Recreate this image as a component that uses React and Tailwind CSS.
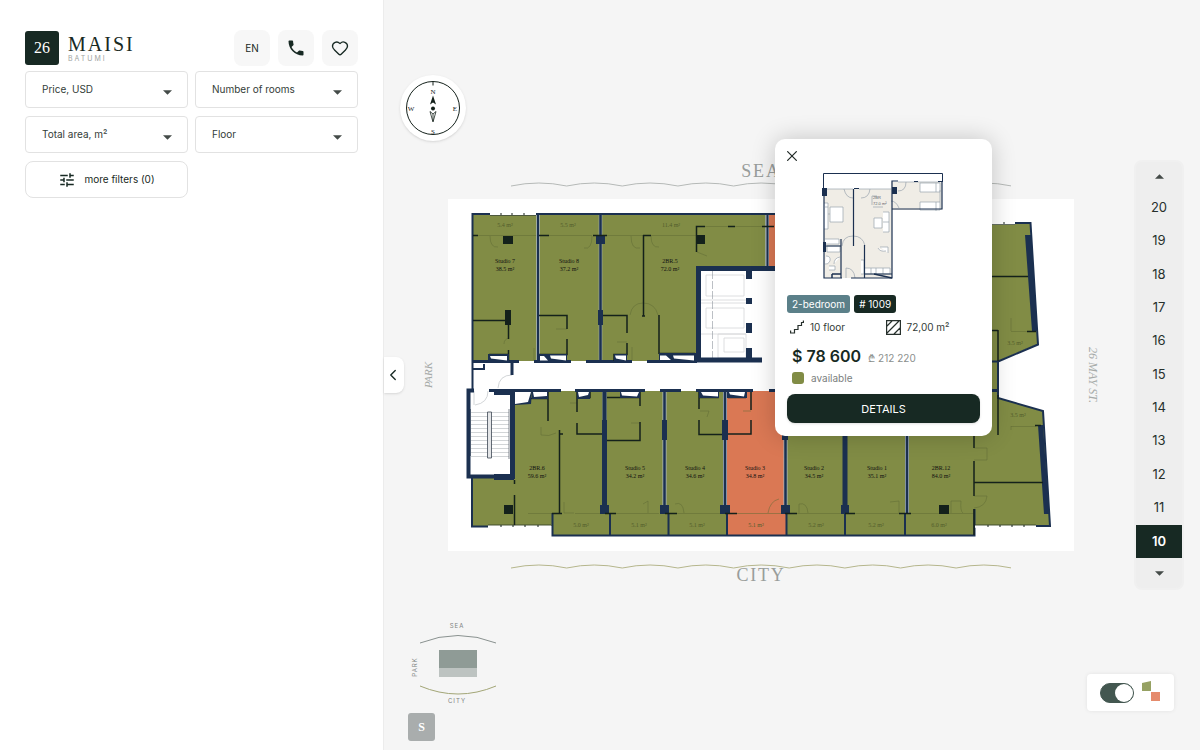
import React, { useState } from "react";
import { ChevronLeft, Heart, X } from "lucide-react";
import { MdPhone, MdTune } from "react-icons/md";

const filters = ["Price, USD", "Number of rooms", "Total area, m²", "Floor"];
const floors = [20, 19, 18, 17, 16, 15, 14, 13, 12, 11, 10];

const NAVY = "#1b3050";
const DARK = "#14211b";
const GREEN = "#818c45";
const ORANGE = "#da7854";

const rooms = [
  { name: "Studio 7", area: "38.5 m²", x: 505, y: 263 },
  { name: "Studio 8", area: "37.2 m²", x: 569, y: 263 },
  { name: "2BR.5", area: "72.0 m²", x: 670, y: 263 },
  { name: "2BR.6", area: "59.6 m²", x: 537, y: 470 },
  { name: "Studio 5", area: "34.2 m²", x: 635, y: 470 },
  { name: "Studio 4", area: "34.6 m²", x: 695, y: 470 },
  { name: "Studio 3", area: "34.8 m²", x: 755, y: 470 },
  { name: "Studio 2", area: "34.5 m²", x: 814, y: 470 },
  { name: "Studio 1", area: "35.1 m²", x: 877, y: 470 },
  { name: "2BR.12", area: "84.0 m²", x: 941, y: 470 },
];

const balconies = [
  ["5.4 m²", 505, 227],
  ["5.5 m²", 568, 227],
  ["11.4 m²", 671, 227],
  ["5.0 m²", 581, 527],
  ["5.1 m²", 639, 527],
  ["5.1 m²", 697, 527],
  ["5.1 m²", 756, 527],
  ["5.2 m²", 816, 527],
  ["5.2 m²", 876, 527],
  ["6.0 m²", 939, 527],
  ["3.5 m²", 1015, 345],
  ["3.5 m²", 1018, 417],
];

const Caret = ({ up, className }) => (
  <svg viewBox="0 0 10 5" className={`h-[5px] w-[9px] ${className || ""}`} aria-hidden="true">
    <path d={up ? "M0 5h10L5 0z" : "M0 0h10L5 5z"} fill="#444b48" />
  </svg>
);

const FilterSelect = ({ label }) => (
  <div className="relative">
    <select
      aria-label={label}
      className="h-[37px] w-full appearance-none rounded border border-[#e2e2e2] bg-white px-4 text-[10px] text-[#333c38] outline-none"
    >
      <option>{label}</option>
    </select>
    <Caret className="pointer-events-none absolute right-4 top-[19px]" />
  </div>
);

const Compass = () => (
  <svg viewBox="0 0 66 66" className="h-[66px] w-[66px] rounded-full bg-white shadow-sm" role="img" aria-label="Compass">
    <circle cx="33" cy="33" r="26.5" fill="none" stroke={DARK} strokeWidth="1" />
    <path d="M33 6.500v4" stroke={DARK} />
    <path d="M33 20.500l3 9-3-2-3 2z" fill={DARK} />
    <circle cx="33" cy="33.500" r="2" fill={DARK} />
    <path d="M33 47l-3-10.500 3 2.500 3-2.500zM33 39v7" fill="none" stroke={DARK} strokeWidth="0.8" />
    <g fill={DARK} fontSize="7" textAnchor="middle" fontFamily="Liberation Serif, serif">
      <text x="33" y="19">N</text>
      <text x="33" y="58.500">S</text>
      <text x="11" y="35.500">W</text>
      <text x="55" y="35.500">E</text>
    </g>
  </svg>
);

const Waves = ({ color }) => (
  <svg viewBox="0 0 501 5" className="mx-auto h-[5px] w-[80%]" preserveAspectRatio="none" aria-hidden="true">
    <path
      d="M0 4Q28-2 55.700 4Q83-2 111.300 4Q139-2 167 4Q195-2 222.700 4Q250-2 278.300 4Q306-2 334 4Q362-2 389.700 4Q417-2 445.300 4Q473-2 501 4"
      fill="none"
      stroke={color}
    />
  </svg>
);

const FloorPlan = () => (
  <svg viewBox="448 199 626 352" className="block w-full bg-white" role="img" aria-label="Plan of the 10 floor">
    {/* Apartments */}
    <g fill={GREEN}>
      <path d="M472 214H768V267H697V361H472z" />
      <path d="M785 214H990V223H1030L1038 344L998 361H785z" />
      <path d="M515 391H605V535H552V526H472V477H515z" />
      <path d="M605 391H727V535H605z" />
      <path d="M785 391H974V535H786z" />
      <path d="M974 361H998V398L1043 411L1050 526H974z" />
    </g>
    <path d="M769 214H785V267H769z M726 391H785V513H787V535H727z" fill={ORANGE} />

    {/* Doors and sills */}
    <g fill="none" stroke="#5f6a35" strokeWidth="0.500">
      <path d="M478 235.500H537M549 235.500H592M605 235.500H643M651 235.500H696M705 226.500H766" />
      <path d="M490 236q0 12 8 11M592 236q0 14 -8 12M631 236q0 14 9 12M651 236q0 12 8 11M697 252l10 4" />
      <path d="M630 315q2-12 13-12q12 0 15 12M556 329h11M617 342h10M509 338q-5 1-5 6M534 348v12M632 347v13" />
      <path d="M528 513.500H558M575 513.500H600M616 513.500H659M677 513.500H720M737 513.500H781M797 513.500H841M855 513.500H899M911 513.500H974" />
      <path d="M564 502v11l10 0M648 513v-12l-5 3M684 513q-1-12-9-9M768 513q2-12 11-14M799 513v-9q8-2 9 9M899 513v-12l-9 1M951 513v-12h10q-1 10 2 12" />
      <path d="M541 427v8q8 2 15-2M570 403h7M631 423h9M700 411h9l-2 6M743 411h8M974 448h13v12h-13M974 496h13q-1 11-13 12" />
      <path d="M1011 331.500h17M1011 331v-13M1011 426.500h25M1011 426v4" />
    </g>

    {/* Lifts */}
    <g fill="none" stroke="#d4d6d8" strokeWidth="0.800">
      <path d="M706 275H744V296H706zM706 308H744V328H706zM724 338H744V352H724zM718 334H746V358H718z" />
      <path d="M701 300H746M701 303H746M701 334H746" />
      <path d="M712.500 271V358" stroke="#8f959d" strokeWidth="0.600" strokeDasharray="8 2" />
    </g>

    {/* Stairs */}
    <g fill="none" stroke="#c6cacd" strokeWidth="0.800">
      <path d="M471 412.500H509M471 416.500H509M471 420.500H509M471 424.500H509M471 428.500H509M471 432.500H509M471 436.500H509M471 440.500H509M471 444.500H509M471 448.500H509M471 452.500H509M471 456.500H509" />
      <path d="M498 388q1-13 14-13M475 405q13-2 13-14M474 405v-14" />
      <path d="M487.500 412H491.500V458H487.500z" fill="#e4e6e8" stroke="#3c4653" />
      <path d="M470.500 409v47M509 409v50" stroke="#5f6872" />
    </g>

    {/* Light outline of the structural walls */}
    <g fill="none" stroke="#a9b5bd" strokeWidth="4">
      <path d="M538 215V361M600.500 215V361M767 215V267" strokeWidth="3.500" />
      <path d="M664.500 392V513M725 392V513M785.500 436V505M907 436V513M604.500 392V505" strokeWidth="4" />
    </g>

    {/* Structural walls */}
    <g fill="none" stroke={NAVY} strokeWidth="2">
      <path d="M490 214H472.500V390M536 214H785M538 214V361M767.500 214V267M610 513V535M668.500 513V535M727 513V535M786.500 513V535M845 513V535M905 513V535" />
      <path d="M600.500 214V361M664.500 391V513M725 391V513M785.500 391V513M907 391V513" strokeWidth="2.500" />
      <path d="M472 361.500H519M534 361.500H571M586 361.500H632M647 361.500H697M512 361V375M489 390.500H561M575 390.500H645M660 390.500H681M696 390.500H753M769 390.500H998" strokeWidth="3" />
      <path d="M604.500 391V505" strokeWidth="4" />
      <path d="M845 391V513" strokeWidth="5" />
      <path d="M473 369H484V364M696 268.500H785M472 478V526.500H488M552.500 513V535.500H974.500V509" />
      <path d="M1015 223H1030.500L1038 344.500L998 361.500V398L1043 411L1050 526H1036M990 361.500H998" />
      <path d="M698.500 361V268.500H785" strokeWidth="5" />
      <path d="M695 360H762" strokeWidth="5" />
      <path d="M474 390.500H468.500V476.500H515" strokeWidth="4" />
      <path d="M512.500 390V479" strokeWidth="5" />
    </g>
    <g fill={NAVY}>
      <path d="M494 390h21v5h-21zM494 474h20v6h-20zM596 235h9v9h-9zM598 310h5v15h-5z" />
      <path d="M746 271h6v8h-6zM746 298h6v6h-6zM746 323h6v10h-6zM746 348h6v10h-6z" />
      <path d="M602 420h5v86h-5zM600 505h9v9h-9zM662 420h5v20h-5zM660 505h9v9h-9zM722 420h6v20h-6zM720 505h10v9h-10zM782 420h6v20h-6zM781 505h9v9h-9zM841 505h8v9h-8z" />
      <path d="M1025 235H1031L1037 331H1032zM1038 425H1043L1049 514H1044z" />
    </g>

    {/* Partitions */}
    <g fill="none" stroke={DARK} strokeWidth="1.500">
      <path d="M473 235.500H478M539 235.500H549M593 235.500H607M643 235.500H651M643.500 235V316M696.500 252V226.500H705M728 226.500H735M762 226.500H774" />
      <path d="M473 320.500H506M508.500 325V339M508.500 350V361M489 354.500H509M489 354V361" />
      <path d="M539 315.500H567V329M567 339V354.500H539M603 315.500H627V333M627 343V354.500H614V361M642 316H645" />
      <path d="M659 315V354M659 353.500H695" />
      <path d="M548 392V421M559.500 430V513M559 434H563M577 392V412M577 423V434H602M577 397.500H590V392M531 398.500H548" />
      <path d="M607 397.500H640V392M640 392V406M640 422V440.500H607M699 392V409M699 420V434.500H722M699 397.500H718V392M728 397.500H746M751 392V410M751 420V434H728" />
      <path d="M514.500 480V484M514.500 495V526M552 513.500H562M605 513.500H616M665 513.500H677M725 513.500H737M785 513.500H797M845 513.500H855M899 513.500H911" />
      <path d="M974 436V448M974 461V496M974 509V535M974 482.500H1043M998 395V435M998 330V361M992 276.500H1028M1035 425.500H1041M1027 331.500H1036M992 330.500H998" />
    </g>
    <path d="M503 236h10v8h-10zM697 235h8v9h-8zM505 310h6v15h-6zM504 505h9v9h-9zM939 505h10v9h-10z" fill={DARK} />

    {/* Shafts */}
    <path
      d="M488 354h21v7h-21zM539 354h28v7h-28zM614 354h13v7h-13zM659 353h37v8h-37zM515 392h17l-1 12-16 1zM532 392h16v7h-16zM577 392h13v7h-13zM620 392h20v6h-20zM699 392h20v6h-20zM727 392h20v6h-20z"
      fill={NAVY}
    />
    <path
      d="M490 356h17v4.500l-16-2zM540 356h4l4 4.500h-8zM550 355.500h16v5l-15-2zM615 355.500h11v5l-10-2zM660 355.500h6l5 4.500h-11zM673 355.500h21v5l-20-2zM515 392h16l-3 10-13 2zM533 392h14v4l-13 1zM578 392h11l-1 3-9 2zM621 392h18l-2 4.500-15-1zM701 392h17v4.500l-15-1zM729 392h16l-1 4.500-14-2z"
      fill="#fff"
    />

    {/* Windows */}
    <g fill="none">
      <path d="M490 214H536M992 223.500H1015M488 526.500H551M975 526.500H1036" stroke="#fff" strokeWidth="2.500" />
      <path d="M490 215.500H536M992 224.500H1015M488 525H551M975 525H1036" stroke={DARK} strokeWidth="0.600" />
      <path d="M501 213v2M512 213v2M524 213v2M1004 222v2M501 525v2M513 525v2M525 525v2M538 525v2M988 525v2M1000 525v2M1012 525v2M1024 525v2" stroke={DARK} />
    </g>

    <g textAnchor="middle" fontFamily="Liberation Serif, serif" fontSize="6">
      {rooms.map((room) => (
        <g key={room.name} fill="#111">
          <text x={room.x} y={room.y}>{room.name}</text>
          <text x={room.x} y={room.y + 8}>{room.area}</text>
        </g>
      ))}
      {balconies.map(([area, x, y]) => (
        <text key={`${x}-${y}`} x={x} y={y} fill="#535d2c">{area}</text>
      ))}
    </g>
  </svg>
);

const ApartmentPlan = () => (
  <svg viewBox="0 0 122 108" className="block h-[108px] w-[122px]" role="img" aria-label="Apartment plan">
    <path d="M2 17H69V10H120V38H70V106H2z" fill="#f0ede6" />
    <g fill="none" stroke="#9aa3ad" strokeWidth="0.700">
      <path d="M5 17H31M37 17H69M76 10H118M22 17q2 9 9 9M48 17q-1 9-9 9M84 10q0 9-8 9M20 74q1-10 11-10q10 0 12 10M24 106v-10q8 0 9 10M69 29q5 0 8 7" />
      <path d="M8 35H21V50H8zM2 31h4v26H2M6 35h-3M6 42h2M3 67h14v5H3M5 74h13v6H5zM52 46h8v10h-8zM61 40h6v20h-6M61 50h6M98 11h20v9H98zM98 30h20v8H98zM114 11v9M114 30v9M118 18v12" fill="#fff" />
      <path d="M42 96h26v6H42M49 96v6M54 96v6M61 96v6M39 88h3v14h-3M56 76q2 4 8 3M58 75h8v6M4 84q5 0 4 5q-2 4-5 3M7 94h6v4H7M18 85q-6 1-6 7" fill="#fff" />
      <path d="M50 24v9M50 24h5M51 35h10" />
    </g>
    <g fill="none" stroke={NAVY} strokeWidth="1.500">
      <path d="M1.500 16V1.500H120.500V9" strokeWidth="1" />
      <path d="M2 17V106H20M29 106H70V37H120V9M31.500 17V74M70 37V9H76M92 9.500H96M32 16.500H37M19 67V106M2 74H19M42.500 73V106M42 102H70M116 9.500H121" strokeWidth="1.200" />
      <path d="M10 102H19M10 102v4M52 102l18 4" />
    </g>
    <path d="M0 16h5v8H0zM70 15h5v7h-5zM1 70h3v10H1z" fill={NAVY} />
    <g fontSize="4" fontFamily="Liberation Sans, sans-serif" fill="#59626b">
      <text x="51" y="27">2BR</text>
      <text x="51" y="33">72.0 m²</text>
    </g>
  </svg>
);

const ApartmentCard = ({ onClose }) => (
  <section className="absolute -top-[60px] left-[327px] w-[217px] rounded-[10px] bg-white px-3 pb-[13px] pt-[10px] shadow-[0_0_24px_rgba(0,0,0,0.2)]">
    <button onClick={onClose} aria-label="Close" className="-ml-1 block">
      <X className="h-[14px] w-[18px] scale-125 text-[#27302c]" strokeWidth={1.8} />
    </button>
    <div className="mt-[9px] pl-[35px]">
      <ApartmentPlan />
    </div>
    <div className="mt-[15px] flex gap-1 text-[10px] leading-[18px] text-white">
      <span className="rounded-[3px] bg-[#5b8089] px-[5px]">2-bedroom</span>
      <span className="rounded-[3px] bg-[#172923] px-[5px]"># 1009</span>
    </div>
    <div className="mt-[6px] grid grid-cols-2 text-[10px] leading-4 text-[#333c38]">
      <span className="flex items-center gap-[6px] pl-[3px]">
        <svg viewBox="0 0 14 14" className="h-[14px] w-[14px]" fill="none" stroke="#27302c" aria-hidden="true">
          <path d="M0.600 10.500V13H4.500V9.500H8V5.500H11.500V2.500H13.400V0.500" strokeWidth="1.200" />
        </svg>
        10 floor
      </span>
      <span className="flex items-center gap-[6px] pl-[2px]">
        <svg viewBox="0 0 15 15" className="h-[15px] w-[15px]" fill="none" stroke="#27302c" aria-hidden="true">
          <path d="M0.600 0.600H14.400V14.400H0.600zM1 6L6 1M1 13L13 1M8 14L14 8" strokeWidth="1.200" />
        </svg>
        72,00 m²
      </span>
    </div>
    <div className="mt-[9px] flex items-baseline gap-[7px] pl-[5px]">
      <strong className="text-base font-semibold leading-6 text-[#172923]">$ 78 600</strong>
      <span className="text-[10px] leading-4 text-[#8b8f8d]">₾ 212 220</span>
    </div>
    <div className="mt-[2px] flex items-center gap-[7px] pl-[5px] text-[10px] leading-4 text-[#7b807e]">
      <span className="h-3 w-3 rounded-[3px] bg-[#818c45]" />
      available
    </div>
    <button className="mt-2 block h-[29px] w-full rounded-lg bg-[#172923] text-[11px] text-white shadow">DETAILS</button>
  </section>
);

const MiniMap = () => (
  <svg viewBox="0 0 90 84" className="h-[84px] w-[90px]" role="img" aria-label="Building sides">
    <path d="M12 21Q50 6 88 21" fill="none" stroke="#8a9290" />
    <path d="M12 64Q50 80 88 64" fill="none" stroke="#a3a677" />
    <path d="M31 28H69V46H31z" fill="#8f9b96" />
    <path d="M31 46H69V55H31z" fill="#bdc3c1" />
    <g fontSize="6" letterSpacing="1" fill="#7d8381" textAnchor="middle" fontFamily="Inter, sans-serif">
      <text x="49" y="6">SEA</text>
      <text x="49" y="81">CITY</text>
      <text transform="translate(9 45) rotate(-90)">PARK</text>
    </g>
  </svg>
);

export default function App() {
  const [floor, setFloor] = useState(10);
  const [cardOpen, setCardOpen] = useState(true);
  const [showStatus, setShowStatus] = useState(true);

  return (
    <div className="flex min-h-screen bg-[#f5f5f5] font-['Inter',sans-serif] text-[#172923]">
      {/* Filters */}
      <aside className="w-[32%] shrink-0 border-r border-[#ececec] bg-white pl-[25px] pr-[25px] pt-[30px]">
        <header className="flex items-center justify-between">
          <a href="#" className="flex items-center gap-[9px]">
            <span className="flex h-[34px] w-[34px] items-center justify-center rounded-[3px] bg-[#172923] font-['Liberation_Serif',serif] text-base text-white">
              26
            </span>
            <span className="block">
              <span className="block font-['Liberation_Serif',serif] text-xl leading-[22px] tracking-widest">MAISI</span>
              <span className="block text-[7px] leading-2 tracking-[2px] text-[#a0a4a2]">BATUMI</span>
            </span>
          </a>
          <div className="flex gap-2">
            <button className="h-9 w-9 rounded-lg bg-[#f7f7f7] text-[10px]">EN</button>
            <button aria-label="Call" className="flex h-9 w-9 items-center justify-center rounded-lg bg-[#f7f7f7]">
              <MdPhone className="h-5 w-5" />
            </button>
            <button aria-label="Favourites" className="flex h-9 w-9 items-center justify-center rounded-lg bg-[#f7f7f7]">
              <Heart className="h-[18px] w-[18px]" strokeWidth={1.8} />
            </button>
          </div>
        </header>

        <div className="mt-[5px] grid grid-cols-2 gap-x-[7px] gap-y-2">
          {filters.map((label) => (
            <FilterSelect key={label} label={label} />
          ))}
          <button className="flex h-[37px] items-center justify-center gap-2 rounded-lg border border-[#e2e2e2] text-[10px]">
            <MdTune className="h-[18px] w-[18px]" />
            more filters (0)
          </button>
        </div>
      </aside>

      <main className="flex min-w-0 flex-1 flex-col pt-[75px]">
        <div className="pl-4">
          <Compass />
        </div>

        <div className="mt-[19px] flex items-center pr-4">
          <div className="flex w-16 items-center">
            <button
              aria-label="Hide filters"
              className="flex h-9 w-5 items-center justify-start rounded-r-lg bg-white shadow-sm"
            >
              <ChevronLeft className="h-[18px] w-[18px] shrink-0" strokeWidth={1.8} />
            </button>
            <span className="flex flex-1 justify-center pl-1">
              <span className="rotate-180 font-['Liberation_Serif',serif] text-[11px] leading-4 text-[#a6aaa8] italic [writing-mode:vertical-rl]">
                PARK
              </span>
            </span>
          </div>

          <div className="min-w-0 flex-1 self-start text-center font-['Liberation_Serif',serif] text-lg leading-[22px] text-[#999d9b]">
            <div className="tracking-widest">SEA</div>
            <Waves color="#b5b9b7" />
            <div className="relative mt-3 text-left font-['Inter',sans-serif]">
              <FloorPlan />
              {cardOpen && <ApartmentCard onClose={() => setCardOpen(false)} />}
            </div>
            <div className="pt-[13px]">
              <Waves color="#b5b68c" />
            </div>
            <div className="-mt-[5px] tracking-widest">CITY</div>
          </div>

          <div className="flex w-[38px] justify-center">
            <span className="font-['Liberation_Serif',serif] text-xs leading-4 text-[#a6aaa8] italic [writing-mode:vertical-rl]">
              26 MAY ST.
            </span>
          </div>

          <nav
            aria-label="Floors"
            className="ml-[22px] flex w-[50px] flex-col self-start rounded-lg border-2 border-[#f0f0f0] bg-[#eeeeee]"
          >
            <button aria-label="Higher floors" className="flex h-[29px] items-center justify-center">
              <Caret up />
            </button>
            <ul className="flex h-[367px] flex-col">
              {floors.map((n) => (
                <li key={n} className="flex flex-1">
                  <button
                    onClick={() => setFloor(n)}
                    className={
                      n === floor
                        ? "flex-1 bg-[#172923] text-[13px] font-semibold text-white"
                        : "flex-1 text-[13px] text-[#27302c]"
                    }
                  >
                    {n}
                  </button>
                </li>
              ))}
            </ul>
            <button aria-label="Lower floors" className="flex h-[30px] items-center justify-center">
              <Caret />
            </button>
          </nav>
        </div>

        <div className="mt-auto flex items-end justify-between pb-[9px] pl-6 pr-[26px] pt-7">
          <div>
            <MiniMap />
            <button className="mt-[7px] flex h-7 w-[27px] items-center justify-center rounded-[3px] bg-[#a9adad] font-['Liberation_Serif',serif] text-xs font-bold text-white">
              S
            </button>
          </div>
          <label className="mb-[30px] flex h-[37px] w-[87px] items-center gap-2 rounded bg-white pl-[13px] shadow-[0_0_4px_rgba(0,0,0,0.08)]">
            <input
              type="checkbox"
              checked={showStatus}
              onChange={(e) => setShowStatus(e.target.checked)}
              aria-label="Show availability"
              className="flex h-5 w-[34px] appearance-none items-center rounded-full border border-[#435750] bg-[#435750] before:block before:h-[18px] before:w-[18px] before:rounded-full before:bg-white before:content-[''] checked:justify-end"
            />
            <svg viewBox="0 0 19 20" className="-mt-1 h-5 w-[19px]" aria-hidden="true">
              <path d="M0 2L9 0V10H0z" fill="#96a163" />
              <path d="M9 11H18V20H9z" fill="#e58b6c" />
            </svg>
          </label>
        </div>
      </main>
    </div>
  );
}
